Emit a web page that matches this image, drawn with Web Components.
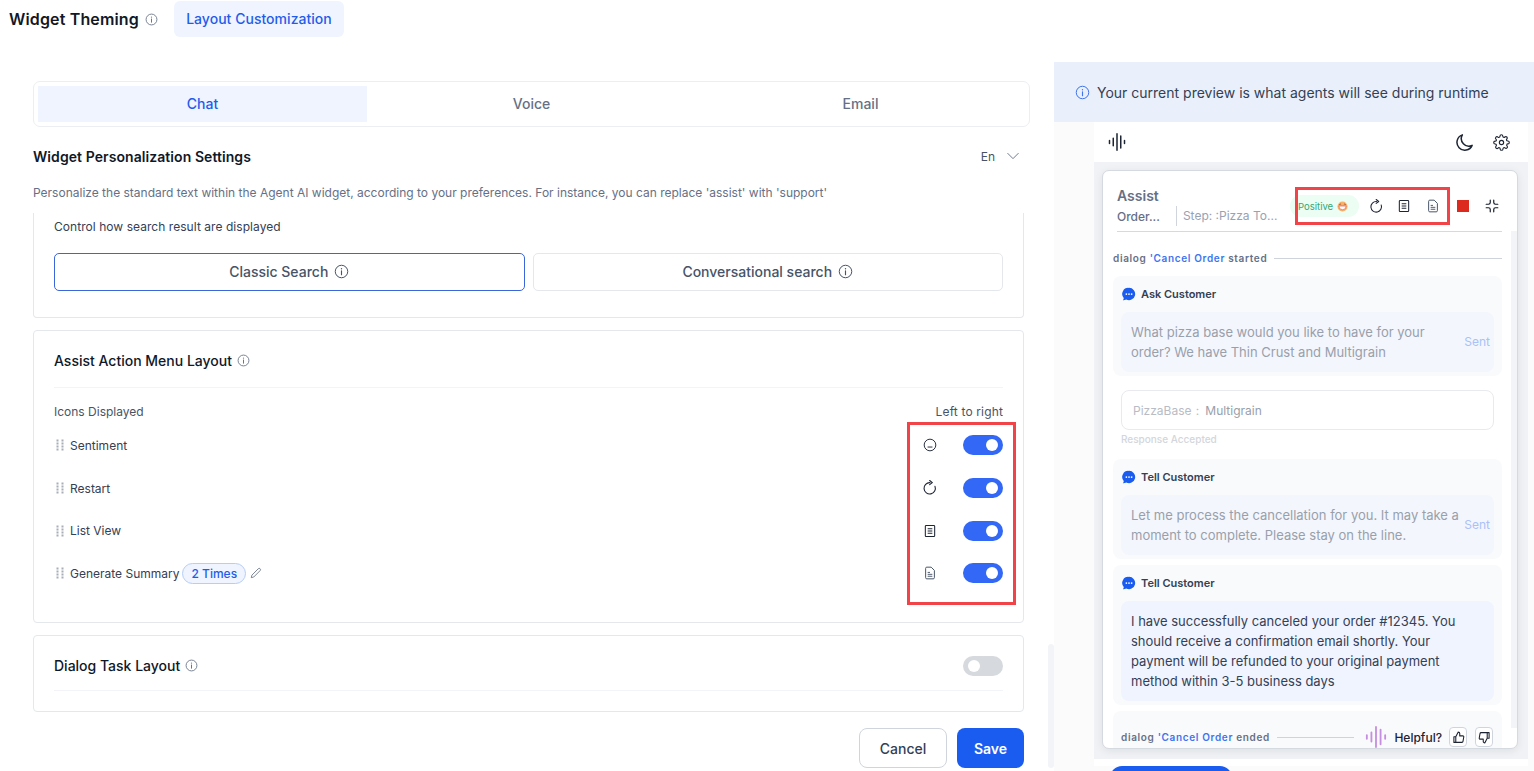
<!DOCTYPE html>
<html lang="en"><head><meta charset="utf-8"><title>Widget Theming</title>
<style>
html,body{margin:0;padding:0;height:771px;overflow:hidden;background:#fff;font-family:Inter,"Liberation Sans",sans-serif;color:#101828}
</style></head><body>
<wt-app></wt-app>
<script>
const ICONS={
 info:'<circle cx="12" cy="12" r="10" fill="none" stroke="currentColor" stroke-width="1.6"/><path d="M12 11v6" stroke="currentColor" stroke-width="1.8" stroke-linecap="round"/><circle cx="12" cy="7.5" r="1.1" fill="currentColor"/>',
 chevron:'<path d="M3 7.5l9 9 9-9" fill="none" stroke="currentColor" stroke-width="1.6" stroke-linecap="round" stroke-linejoin="round"/>',
 wave:'<g stroke="currentColor" stroke-width="2" stroke-linecap="round"><path d="M2 10v4M7 7v10M12 1v22M17 4v16M22 10v4"/></g>',
 moon:'<path d="M21.500 16.500A10.500 10.500 0 1 1 8.500 2.500a10 10 0 0 0 13 14z" fill="none" stroke="currentColor" stroke-width="2" stroke-linejoin="round"/>',
 gear:'<circle cx="12" cy="12" r="3" fill="none" stroke="currentColor" stroke-width="1.6"/><path fill="none" stroke="currentColor" stroke-width="1.6" stroke-linejoin="round" d="M19.4 15a1.65 1.65 0 0 0 .33 1.82l.06.06a2 2 0 1 1-2.83 2.83l-.06-.06a1.65 1.65 0 0 0-2.82 1.17V21a2 2 0 0 1-4 0v-.09A1.65 1.65 0 0 0 7.2 19.8l-.06.06a2 2 0 1 1-2.83-2.83l.06-.06a1.65 1.65 0 0 0-1.17-2.82H3a2 2 0 0 1 0-4h.09A1.65 1.65 0 0 0 4.2 7.2l-.06-.06a2 2 0 1 1 2.83-2.83l.06.06A1.65 1.65 0 0 0 9.85 3.2V3a2 2 0 0 1 4 0v.09a1.65 1.65 0 0 0 2.8 1.17l.06-.06a2 2 0 1 1 2.83 2.83l-.06.06a1.65 1.65 0 0 0 1.17 2.82H21a2 2 0 0 1 0 4h-.09A1.65 1.65 0 0 0 19.4 15z"/>',
 restart:'<path d="M19.500 9.500A8.500 8.500 0 1 1 12 4" fill="none" stroke="currentColor" stroke-width="1.7" stroke-linecap="round"/><path d="M11.500 .8L15.500 4l-4 3" fill="none" stroke="currentColor" stroke-width="1.7" stroke-linecap="round" stroke-linejoin="round"/>',
 list:'<rect x="4" y="2.5" width="16" height="19" rx="1.5" fill="none" stroke="currentColor" stroke-width="1.8"/><path d="M8 8h8M8 12h8M8 16h8" stroke="currentColor" stroke-width="1.8"/>',
 doc:'<path d="M6.500 2h7.500l5.500 5.500V20a2 2 0 0 1-2 2h-11a2 2 0 0 1-2-2V4a2 2 0 0 1 2-2z" fill="none" stroke="currentColor" stroke-width="1.7" stroke-linejoin="round"/><path d="M8 11h4M8 14.300h8M8 17.600h8" stroke="currentColor" stroke-width="1.6"/>',
 face:'<circle cx="12" cy="12" r="10" fill="none" stroke="currentColor" stroke-width="1.6"/><path d="M8.500 15.500h7" stroke="currentColor" stroke-width="1.6" stroke-linecap="round"/>',
 collapse:'<path d="M9 2v4a3 3 0 0 1-3 3H2M15 2v4a3 3 0 0 0 3 3h4M9 22v-4a3 3 0 0 0-3-3H2M15 22v-4a3 3 0 0 1 3-3h4" fill="none" stroke="currentColor" stroke-width="2" stroke-linecap="round"/>',
 up:'<path d="M7 10.500v10.500H3.500V10.500zM7 10.500l4.500-8.500a2.800 2.800 0 0 1 2.800 2.800V9h5.600a1.800 1.800 0 0 1 1.800 2.100l-1.400 8.200a2 2 0 0 1-2 1.700H7" fill="none" stroke="currentColor" stroke-width="2" stroke-linejoin="round"/>',
 down:'<path d="M17 13.500V3h3.500v10.500zM17 13.500L12.500 22a2.800 2.800 0 0 1-2.800-2.800V15H4.100a1.800 1.800 0 0 1-1.800-2.100l1.400-8.200a2 2 0 0 1 2-1.700H17" fill="none" stroke="currentColor" stroke-width="2" stroke-linejoin="round"/>',
 pencil:'<path d="M16.500 3.500a2.600 2.600 0 0 1 3.700 3.700L7.500 20l-5 1.300 1.300-5z" fill="none" stroke="currentColor" stroke-width="1.700" stroke-linejoin="round"/>',
 bubble:'<path d="M12 1.500a10.500 10.500 0 1 1-4.800 19.800c-1.500.9-3.400 1.300-5.700 1.200 1-.9 1.500-2.100 1.500-3.600A10.500 10.500 0 0 1 12 1.500z" fill="#1a5cf0"/><circle cx="7.500" cy="12" r="1.500" fill="#fff"/><circle cx="12" cy="12" r="1.500" fill="#fff"/><circle cx="16.500" cy="12" r="1.500" fill="#fff"/>',
 drag:'<g fill="currentColor"><rect x="5" y="1" width="4" height="4"/><rect x="15" y="1" width="4" height="4"/><rect x="5" y="7" width="4" height="4"/><rect x="15" y="7" width="4" height="4"/><rect x="5" y="13" width="4" height="4"/><rect x="15" y="13" width="4" height="4"/><rect x="5" y="19" width="4" height="4"/><rect x="15" y="19" width="4" height="4"/></g>',
 grin:'<circle cx="12" cy="12" r="11" fill="#f6b26b"/><path d="M4 11h16a8 8 0 0 1-16 0z" fill="#fff" stroke="#e2604a" stroke-width="1.500"/><path d="M5 8q2-3 4 0M15 8q2-3 4 0" stroke="#b4492a" stroke-width="2" fill="none"/>'
};
function def(name,css,html,extra){
 customElements.define(name,class extends HTMLElement{
  constructor(){super();this.attachShadow({mode:'open'});}
  connectedCallback(){
   const h=typeof html==='function'?html(this):html;
   this.shadowRoot.innerHTML='<style>'+css+'</style>'+h;
   if(extra)extra(this);
  }
 });
}
def('wt-icon',':host{display:inline-flex;flex:none;line-height:0}svg{display:block;width:100%;height:100%}',
 el=>`<svg viewBox="0 0 24 24" aria-hidden="true">${ICONS[el.getAttribute('name')]||''}</svg>`,
 el=>{const s=el.getAttribute('size')||16;el.style.width=s+'px';el.style.height=s+'px';if(el.getAttribute('color'))el.style.color=el.getAttribute('color');});

def('wt-toggle',`:host{display:block;width:40px;height:20px;border-radius:10px;background:#3268f5;position:relative;flex:none}
 :host([off]){background:#d6d9dd}
 i{position:absolute;top:4px;right:5px;width:12px;height:12px;border-radius:50%;background:#fff}
 :host([off]) i{right:auto;left:5px}`,'<i></i>');

def('wt-header',`:host{display:flex;align-items:center;height:36px;margin-top:1px;padding-left:9px}
 h1{font-size:16px;font-weight:600;margin:0 6px 0 0;color:#101828;line-height:36px;letter-spacing:.15px}
 wt-icon{color:#667085}
 a{margin-left:16px;height:36px;width:170px;box-sizing:border-box;padding-bottom:1px;background:#eff4fe;border-radius:6px;color:#1f5ceb;font-size:14px;font-weight:500;letter-spacing:.03px;display:flex;align-items:center;justify-content:center}`,
 `<h1>Widget Theming</h1><wt-icon name="info" size="13"></wt-icon><a>Layout Customization</a>`);

def('wt-channel-tabs',`:host{display:flex;margin:44px 24px 0 33px;height:46px;box-sizing:border-box;border:1px solid #eceef1;border-radius:7px;padding:4px}
 span{flex:1;display:flex;align-items:center;justify-content:center;font-size:14px;font-weight:500;color:#667085;padding-bottom:1px}
 .on{background:#eff4fe;color:#1f5ceb}`,
 `<span class="on">Chat</span><span>Voice</span><span>Email</span>`);

def('wt-settings-head',`:host{display:block;margin:0 30px 0 33px}
 .t{display:flex;justify-content:space-between;align-items:center;height:20px;margin-top:19px}
 h2{font-size:14px;font-weight:600;margin:0;color:#101828;letter-spacing:.07px}
 .l{display:flex;align-items:center;gap:11px;font-size:12px;color:#475467;margin-right:4px}
 p{margin:19px 0 0;font-size:12px;line-height:15px;color:#667085}`,
 `<div class="t"><h2>Widget Personalization Settings</h2><div class="l">En<wt-icon name="chevron" size="14" color="#667085"></wt-icon></div></div>
  <p>Personalize the standard text within the Agent AI widget, according to your preferences. For instance, you can replace 'assist' with 'support'</p>`);

def('wt-card',`:host{display:block;margin:12px 30px 0 33px;border:1px solid #e4e7ec;border-radius:4px;padding:0 20px;box-sizing:border-box}
 :host([cut]){border-top:0;border-radius:0 0 4px 4px;margin-top:13px}`,'<slot></slot>');

def('wt-search-choice',`:host{display:block;padding-top:6px;height:104px;box-sizing:border-box}
 p{margin:0;font-size:12px;line-height:16px;color:#344054;letter-spacing:.05px}
 .r{display:flex;gap:8px;margin-top:18px}
 .b{flex:1;height:38px;box-sizing:border-box;border:1px solid #e4e7ec;border-radius:5px;display:flex;align-items:center;justify-content:center;gap:6px;padding-bottom:1px;font-size:14px;font-weight:500;color:#475467}
 .on{border-color:#3b66d9;color:#475467}`,
 `<p>Control how search result are displayed</p><div class="r"><div class="b on">Classic Search <wt-icon name="info" size="15"></wt-icon></div><div class="b">Conversational search <wt-icon name="info" size="15"></wt-icon></div></div>`);

def('wt-section-title',`:host{display:flex;align-items:center;height:57px;padding-top:2px;box-sizing:border-box;border-bottom:1px solid #f2f4f7;font-size:14px;font-weight:500;color:#101828;gap:5px;justify-content:space-between}
 div{display:flex;align-items:center;gap:5px}wt-icon{color:#667085}`,
 el=>`<div>${el.getAttribute('text')}<wt-icon name="info" size="13"></wt-icon></div><slot></slot>`);

def('wt-menu-row',`:host{display:flex;align-items:center;height:42.7px;font-size:12px;color:#344054}
 .d{color:#a8adb6;margin-right:4px}
 .x{flex:1;display:flex;align-items:center;min-width:0}
 .i{width:16px;margin-right:25px;display:flex;justify-content:center;color:#1d2433}
 .c{margin-left:3px;height:21px;box-sizing:border-box;padding:0 8px;border:1px solid #b5cdf7;background:#eff4fe;border-radius:11px;display:flex;align-items:center;color:#1f5ceb;font-weight:500}
 .p{color:#667085;margin-left:4px}`,
 el=>`<div class="x"><wt-icon class="d" name="drag" size="12"></wt-icon>${el.getAttribute('label')}${el.hasAttribute('chip')?`<span class="c">${el.getAttribute('chip')}</span><wt-icon class="p" name="pencil" size="12"></wt-icon>`:''}</div><div class="i"><wt-icon name="${el.getAttribute('icon')}" size="${el.getAttribute('isize')||14}" style="${el.getAttribute('icon')==='doc'?'color:#475467':''}"></wt-icon></div><wt-toggle></wt-toggle>`);

def('wt-action-menu',`:host{display:block;position:relative;height:234px}
 .h{display:flex;justify-content:space-between;font-size:12px;line-height:16px;color:#475467;padding-top:16px;height:19px}
 .h span+span{letter-spacing:.15px}
 .r{margin-top:1px}
 .box{position:absolute;left:853px;top:34px;width:109px;height:183px;box-sizing:border-box;border:3px solid #f04448;pointer-events:none}`,
 `<div class="h"><span>Icons Displayed</span><span>Left to right</span></div>
  <div class="r">
  <wt-menu-row label="Sentiment" icon="face"></wt-menu-row>
  <wt-menu-row label="Restart" icon="restart" isize="16"></wt-menu-row>
  <wt-menu-row label="List View" icon="list"></wt-menu-row>
  <wt-menu-row label="Generate Summary" icon="doc" chip="2 Times"></wt-menu-row>
  </div><div class="box"></div>`);

def('wt-actions',`:host{display:flex;justify-content:flex-end;gap:10px;margin:16px 30px 0 0}
 button{font:600 14px Inter,"Liberation Sans",sans-serif;height:40px;border-radius:8px;box-sizing:border-box}
 .c{width:88px;background:#fff;border:1px solid #d0d5dd;color:#344054;font-weight:500}
 .s{width:67px;background:#1a5cf0;border:0;color:#fff}`,
 `<button class="c">Cancel</button><button class="s">Save</button>`);

def('wt-left',`:host{display:block;width:1054px;position:relative;height:771px;overflow:hidden;flex:none}
 .sb{position:absolute;right:0;top:644px;width:6px;height:124px;background:#f2f4f7;border-radius:3px}`,
 `<wt-header></wt-header><wt-channel-tabs></wt-channel-tabs><wt-settings-head></wt-settings-head>
  <wt-card cut><wt-search-choice></wt-search-choice></wt-card>
  <wt-card><wt-section-title text="Assist Action Menu Layout"></wt-section-title><wt-action-menu></wt-action-menu></wt-card>
  <wt-card style="height:77px"><wt-section-title text="Dialog Task Layout" style="height:55px;padding-top:5px"><wt-toggle off></wt-toggle></wt-section-title></wt-card>
  <wt-actions></wt-actions><div class="sb"></div>`);

def('wt-dialog-line',`:host{display:flex;align-items:center;gap:7px;font-size:10px;font-weight:600;letter-spacing:.65px;color:#667085;white-space:nowrap}
 b{font-weight:600;color:#3e74ef}i{flex:1;height:1px;background:#cfd4dc;display:block}
 span{display:block}`,
 el=>`<span>dialog <b>'Cancel Order</b> ${el.getAttribute('state')}</span><i></i><slot></slot>`);

def('wt-msg',`:host{display:block;background:#f9fafc;border-radius:8px;padding:8px 8px 4px;margin-top:8px;box-sizing:border-box}
 .h{display:flex;align-items:center;gap:5px;height:20px;padding-left:1px;font-size:11px;font-weight:600;color:#344054}
 .b{margin-top:8px;background:#f4f6fd;border-radius:8px;padding:10px;display:flex;align-items:center;justify-content:space-between;font-size:13px;line-height:20px;color:#98a0ab}
 .s{font-size:12px;color:#a9c1f8;margin-right:-6px;flex:none;margin-left:4px}
 :host([live]) .b{background:#f0f4fe;color:#344054}`,
 el=>`<div class="h"><wt-icon name="bubble" size="14"></wt-icon>${el.getAttribute('title')}</div><div class="b"><span><slot></slot></span>${el.hasAttribute('sent')?'<span class="s">Sent</span>':''}</div>`);

def('wt-response',`:host{display:block;padding:14px 8px 5px}
 .i{height:40px;box-sizing:border-box;border:1px solid #e8eaee;border-radius:8px;display:flex;align-items:center;padding-left:11px;font-size:12px;color:#98a0ab}
 em{font-style:normal;color:#b8bcc4;margin-right:6px}
 u{text-decoration:none;margin-left:1px}
 p{margin:2px 0 0;font-size:10px;line-height:14px;font-weight:500;color:#d3d6dc}`,
 `<div class="i"><em>PizzaBase&nbsp;<u>:</u></em>Multigrain</div><p>Response Accepted</p>`);

def('wt-assist',`:host{display:block;position:relative;height:579px;margin:8px 10px 0 8px;background:#fff;border:1px solid #d5d9e0;border-radius:7px;box-sizing:border-box;overflow:hidden;box-shadow:0 2px 8px rgba(16,24,40,.08)}
 .top{margin:0 15px 0 14px;height:61px;box-sizing:border-box;border-bottom:1px solid #d5d9e0;display:flex;justify-content:space-between}
 .tl{padding-top:15px;width:178px}
 .a{font-size:14px;font-weight:600;line-height:20px;color:#667085}
 .s{display:flex;align-items:center;font-size:12px;height:20px;color:#667085;font-weight:500;white-space:nowrap}
 .s span+span{margin-left:16px;padding-left:6px;border-left:1px solid #d0d5dd;color:#98a2b3;font-weight:400;line-height:20px}
 .tr{display:flex;align-items:center;align-self:flex-start;height:70px;margin-right:3px}
 .pill{width:69px;height:22px;border-radius:11px;background:#ecfdf3;box-sizing:border-box;padding-left:8px;display:flex;align-items:center;gap:4px;font-size:9.5px;color:#36a673;margin-right:9.5px}
 .ic{color:#1d2433;margin-right:13.5px}
 .red{width:12px;height:12px;background:#dc2a1f;margin:0 16px 0 9px}
 .box{position:absolute;left:192px;top:16px;width:155px;height:38px;box-sizing:border-box;border:3px solid #f04448}
 .body{padding:16px 15px 0 10px}
 wt-dialog-line{height:20px}
 .e{background:#f9fafc;border-radius:8px 8px 0 0;margin-top:6px;height:40px;padding:16px 9px 0 8px;box-sizing:border-box}
 .h{display:flex;align-items:center;gap:7px;font-size:12px;font-weight:500;color:#1d2433;letter-spacing:0;margin-left:4px}
 .t{width:18px;height:20px;border:1px solid #d0d5dd;border-radius:4px;box-sizing:border-box;display:flex;align-items:center;justify-content:center;background:#fff;color:#1d2433}
 .sc{position:absolute;right:0;top:60px;width:6px;height:497px;background:#f2f4f7}`,
 `<div class="top"><div class="tl"><div class="a">Assist</div><div class="s"><span>Order...</span><span>Step: :Pizza To...</span></div></div>
   <div class="tr"><div class="pill">Positive <wt-icon name="grin" size="11"></wt-icon></div>
   <wt-icon class="ic" name="restart" size="15"></wt-icon><wt-icon class="ic" name="list" size="14" style="margin-right:15px"></wt-icon><wt-icon class="ic" name="doc" size="14" style="margin-right:8px;color:#475467"></wt-icon>
   <span class="red"></span><wt-icon name="collapse" size="14"></wt-icon></div></div>
  <div class="box"></div>
  <div class="body">
   <wt-dialog-line state="started"></wt-dialog-line>
   <wt-msg title="Ask Customer" sent>What pizza base would you like to have for your order? We have Thin Crust and Multigrain</wt-msg>
   <wt-response></wt-response>
   <wt-msg title="Tell Customer" sent>Let me process the cancellation for you. It may take a moment to complete. Please stay on the line.</wt-msg>
   <wt-msg title="Tell Customer" live style="margin-top:6px">I have successfully canceled your order #12345. You should receive a confirmation email shortly. Your payment will be refunded to your original payment method within 3-5 business days</wt-msg>
   <div class="e"><wt-dialog-line state="ended"><div class="h"><wt-icon name="wave" size="22" color="#c58ee0"></wt-icon>Helpful?<span class="t"><wt-icon name="up" size="13"></wt-icon></span><span class="t" style="margin-left:1px"><wt-icon name="down" size="13"></wt-icon></span></div></wt-dialog-line></div>
  </div><div class="sc"></div>`);

def('wt-preview',`:host{display:block;width:480px;height:771px;background:#fbfbfc;overflow:hidden;flex:none}
 .w{height:62px;background:#fff}
 .note{height:60px;background:#e9f0fb;display:flex;align-items:center;gap:7px;padding:0 0 0 21px;font-size:14px;color:#344054;box-sizing:border-box}
 .note wt-icon{color:#3e74ef}
 .frame{margin:0 6px 0 40px;height:637px;background:#f0f2f5;overflow:hidden}
 .bar{height:40px;background:#fff;display:flex;align-items:center;padding:0 18px 0 14px;color:#1d2433;gap:19px}
 .bar wt-icon:first-child{margin-right:auto}
 .foot{height:7px;background:#fff;margin:0 6px 0 40px}
 .cta{margin:0 0 0 56px;width:122px;height:20px;border-radius:12px 12px 0 0;background:#1a5cf0}`,
 `<div class="w"></div><div class="note"><wt-icon name="info" size="15"></wt-icon>Your current preview is what agents will see during runtime</div>
  <div class="frame"><div class="bar"><wt-icon name="wave" size="18"></wt-icon><wt-icon name="moon" size="18"></wt-icon><wt-icon name="gear" size="17"></wt-icon></div><wt-assist></wt-assist></div>
  <div class="foot"></div><div class="cta"></div>`);

def('wt-app',':host{display:flex;width:1534px;height:771px;overflow:hidden}','<wt-left></wt-left><wt-preview></wt-preview>');
</script>
</body></html>
